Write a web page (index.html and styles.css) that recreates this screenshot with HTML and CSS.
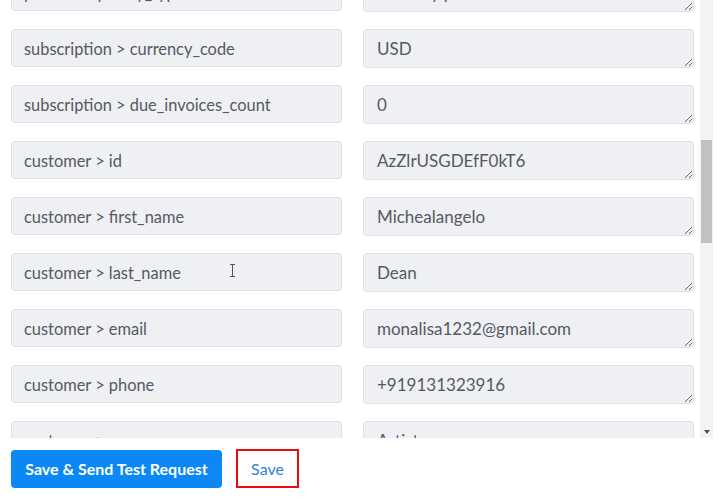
FILE: index.html
```html
<!DOCTYPE html>
<html>
<head>
<meta charset="utf-8">
<link rel="stylesheet" href="styles.css">
</head>
<body>
<div class="page">
  <div class="scroller">
    <div class="list">
      <div class="row"><input class="key" readonly value="plan > frequency_type"><textarea class="val" readonly rows="1">Monthly plan</textarea></div>
      <div class="row"><input class="key" readonly value="subscription > currency_code"><textarea class="val" readonly rows="1">USD</textarea></div>
      <div class="row"><input class="key" readonly value="subscription > due_invoices_count"><textarea class="val" readonly rows="1">0</textarea></div>
      <div class="row"><input class="key" readonly value="customer > id"><textarea class="val" readonly rows="1">AzZlrUSGDEfF0kT6</textarea></div>
      <div class="row"><input class="key" readonly value="customer > first_name"><textarea class="val" readonly rows="1">Michealangelo</textarea></div>
      <div class="row"><input class="key" readonly value="customer > last_name"><textarea class="val" readonly rows="1">Dean</textarea></div>
      <div class="row"><input class="key" readonly value="customer > email"><textarea class="val" readonly rows="1">monalisa1232@gmail.com</textarea></div>
      <div class="row"><input class="key" readonly value="customer > phone"><textarea class="val" readonly rows="1">+919131323916</textarea></div>
      <div class="row"><input class="key" readonly value="customer > company"><textarea class="val" readonly rows="1">Artist co</textarea></div>
    </div>
    <div class="scrollbar">
      <div class="thumb"></div>
      <div class="arrow"></div>
    </div>
    <svg class="ibeam" width="7" height="13" viewBox="0 0 7 13"><path d="M1 0.5h5M1 12.5h5M3.5 0.5v12" stroke="#555" stroke-width="1" fill="none"/></svg>
  </div>
  <div class="actions">
    <button class="primary">Save &amp; Send Test Request</button>
    <button class="link">Save</button>
  </div>
</div>
</body>
</html>
```
FILE: styles.css
```css
html, body {
  margin: 0;
  padding: 0;
  background: #fff;
}
.page {
  width: 726px;
  height: 504px;
  font-family: Lato, "Open Sans", sans-serif;
}
.scroller {
  position: relative;
  height: 438px;
  overflow: hidden;
  display: flex;
  width: 713px;
}
.list {
  flex: 1;
  margin-top: -27px;
  padding: 0 6px 0 11px;
  display: flex;
  flex-direction: column;
  gap: 18px;
}
.row {
  display: grid;
  grid-template-columns: 331px 331px;
  column-gap: 21px;
  height: 38px;
}
.key, .val {
  box-sizing: border-box;
  margin: 0;
  background: #eef0f4;
  border: 1px solid #dde1e7;
  border-radius: 4px;
  color: #555a60;
  font-family: Lato, "Open Sans", sans-serif;
  outline: none;
}
.key {
  height: 38px;
  padding: 0 12px;
  font-size: 16.4px;
}
.val {
  height: 39px;
  padding: 8px 13px;
  font-size: 17px;
  line-height: 21px;
  resize: vertical;
  overflow: hidden;
}
.scrollbar {
  width: 13px;
  background: #f3f3f3;
  display: flex;
  flex-direction: column;
  align-items: center;
}
.thumb {
  width: 11px;
  height: 103px;
  margin-top: 140px;
  background: #c1c1c1;
}
.arrow {
  margin-top: auto;
  margin-bottom: 4px;
  width: 0;
  height: 0;
  border-left: 3.5px solid transparent;
  border-right: 3.5px solid transparent;
  border-top: 4px solid #505050;
}
.ibeam {
  position: absolute;
  left: 229px;
  top: 264px;
}
.actions {
  display: flex;
  align-items: center;
  gap: 14px;
  padding: 11px 0 0 11px;
}
.primary {
  height: 38px;
  width: 211px;
  border: none;
  border-radius: 4px;
  background: #0b88f3;
  color: #fff;
  font-family: Lato, "Open Sans", sans-serif;
  font-size: 16px;
  font-weight: 700;
  padding: 0;
}
.link {
  box-sizing: border-box;
  height: 39px;
  width: 63px;
  border: 2px solid #ef0a0a;
  background: #fff;
  color: #2f7fdc;
  font-family: Lato, "Open Sans", sans-serif;
  font-size: 16px;
  padding: 0;
}
```
